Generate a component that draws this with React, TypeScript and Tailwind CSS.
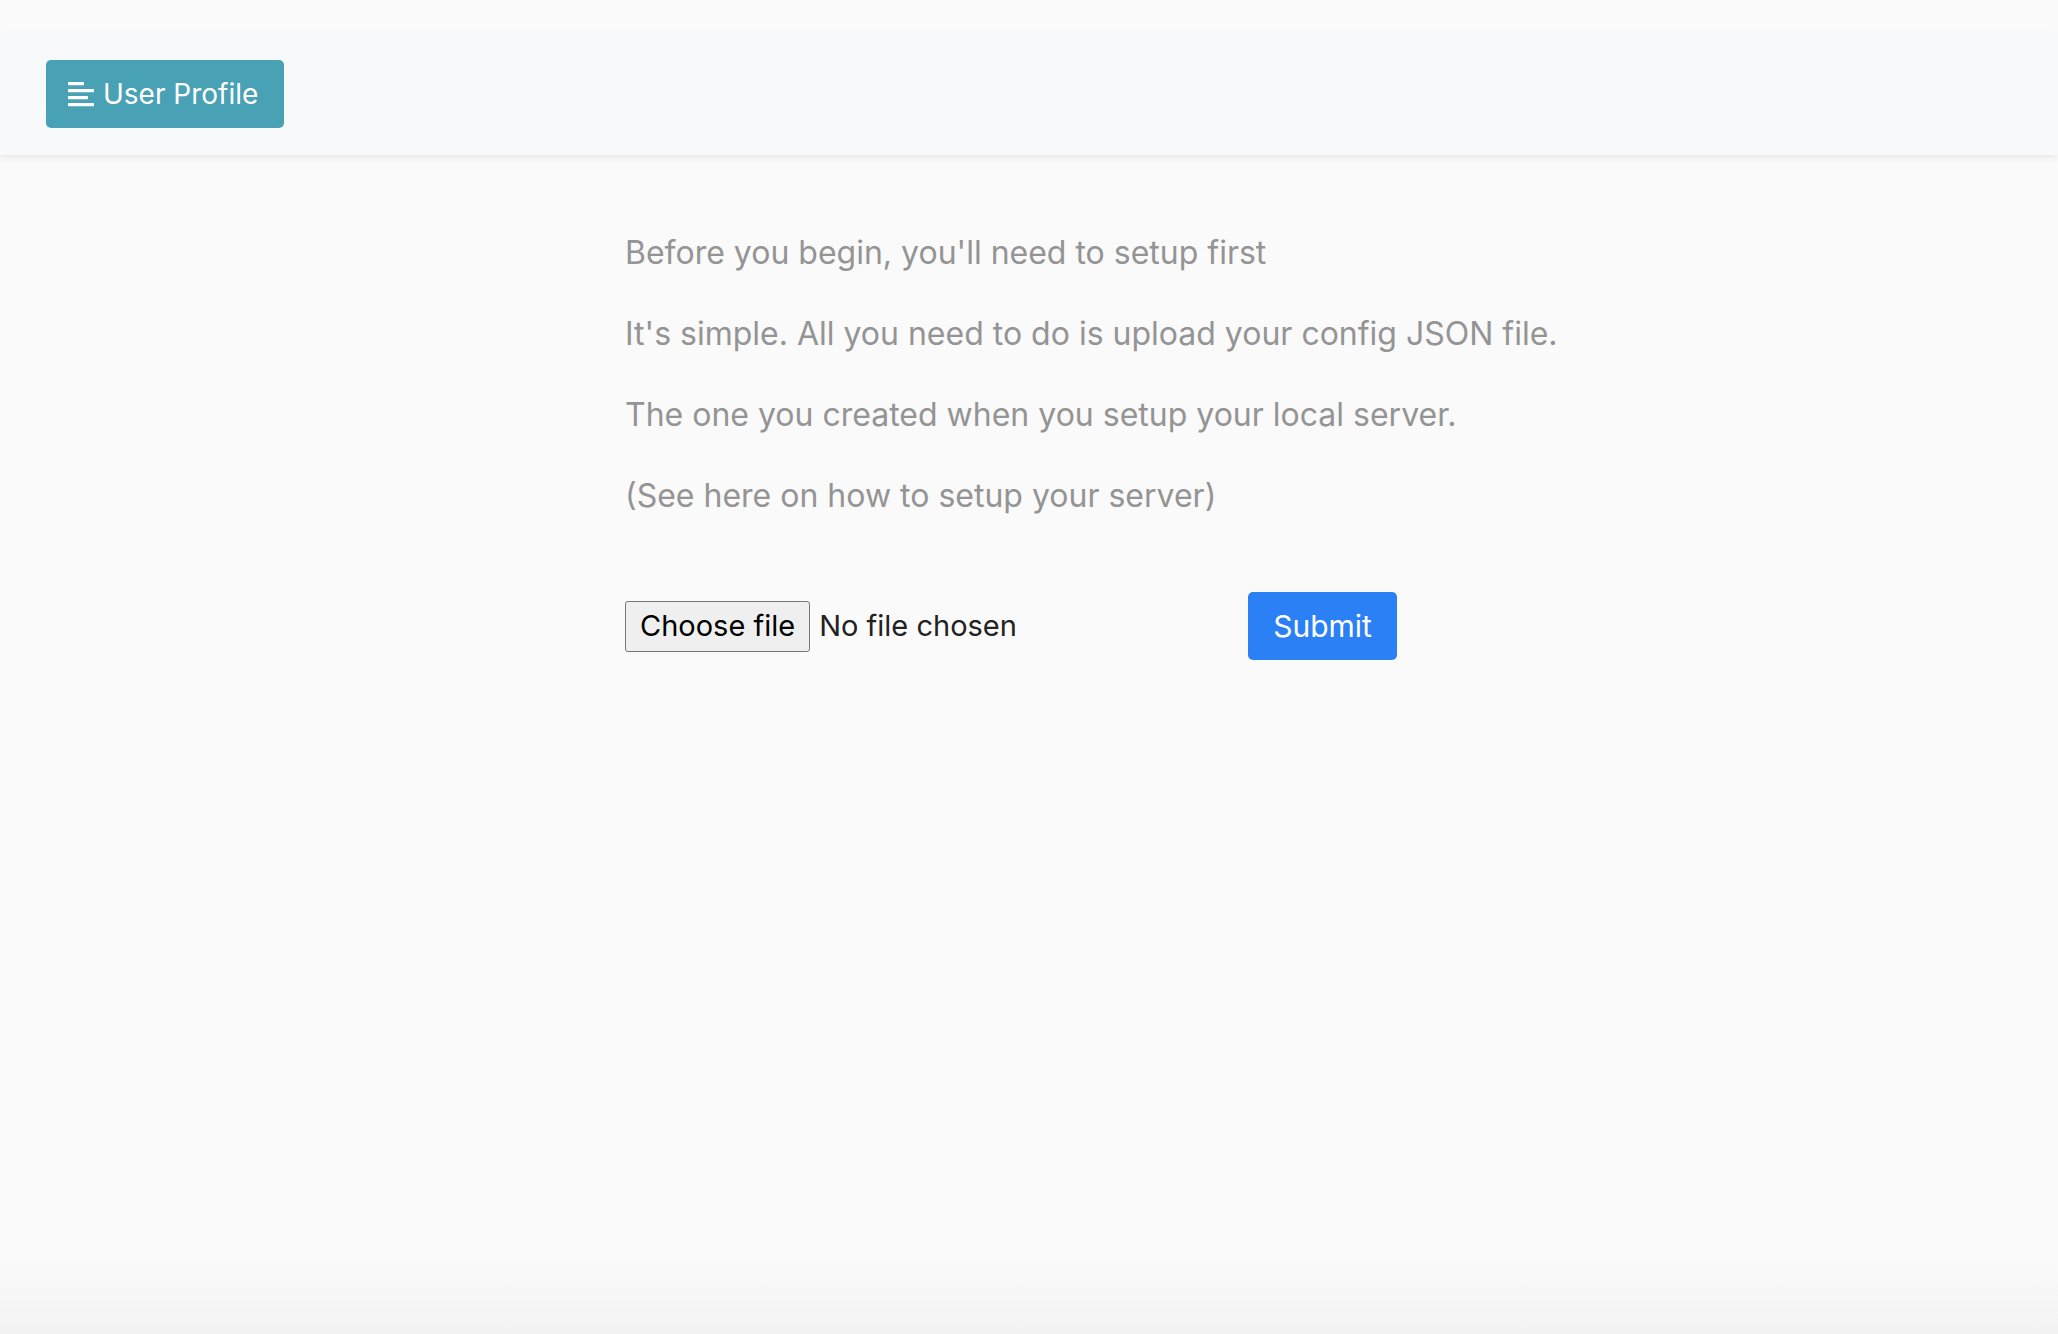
const lines = [
  "Before you begin, you'll need to setup first",
  "It's simple. All you need to do is upload your config JSON file.",
  "The one you created when you setup your local server.",
  "(See here on how to setup your server)",
];

const AlignLeftIcon = () => (
  <svg width="26" height="26" viewBox="0 0 26 26" fill="#ffffff">
    <rect x="0" y="1" width="16" height="3.2" rx="0.6" />
    <rect x="0" y="8" width="26" height="3.2" rx="0.6" />
    <rect x="0" y="15" width="20" height="3.2" rx="0.6" />
    <rect x="0" y="22" width="26" height="3.2" rx="0.6" />
  </svg>
);

export default function App() {
  return (
    <div className="flex min-h-screen flex-col bg-[#fafafa] font-['Inter',sans-serif]">
      <header className="mt-8 flex h-[123px] items-center bg-[#f8f9fa] pl-[46px] shadow-[0_3px_6px_rgba(0,0,0,0.07)]">
        <button className="flex h-[68px] w-[238px] items-center gap-[9px] rounded-[5px] bg-[#49a1b5] pl-[22px] text-[28px] text-white">
          <AlignLeftIcon />
          <span>User Profile</span>
        </button>
      </header>

      <main className="mx-auto w-[808px] flex-1 pt-[74px]">
        <div className="flex flex-col gap-[33px]">
          {lines.map((line) => (
            <p key={line} className="whitespace-nowrap text-[32px] leading-[48px] text-[#949494]">
              {line}
            </p>
          ))}
        </div>

        <form className="mt-[72px] flex items-center gap-6" onSubmit={(e) => e.preventDefault()}>
          <div className="flex w-[599px] items-center gap-[9px]">
            <label className="flex h-[51px] cursor-default items-center rounded-[3px] border border-[#767676] bg-[#efefef] px-[14px] text-[29px] text-black">
              Choose file
              <input type="file" className="hidden" />
            </label>
            <span className="text-[29px] text-[#222222]">No file chosen</span>
          </div>
          <button
            type="submit"
            className="h-[68px] w-[149px] rounded-[5px] bg-[#2b80f6] text-[30px] text-white"
          >
            Submit
          </button>
        </form>
      </main>

      <div className="h-[70px] bg-gradient-to-b from-[#fafafa] to-[#f2f2f2]" />
    </div>
  );
}
